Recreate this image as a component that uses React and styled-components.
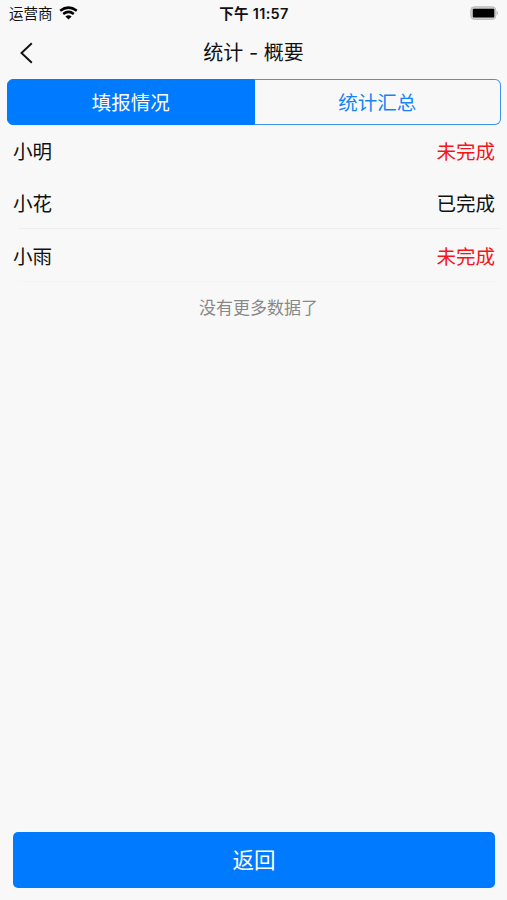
import React from 'react'
import styled, { createGlobalStyle } from 'styled-components'

const GlobalStyle = createGlobalStyle`
  * {
    box-sizing: border-box;
  }

  body {
    margin: 0;
    background: #f8f8f8;
    color: #111;
    font-family: Inter, 'Noto Sans CJK SC', sans-serif;
  }

  button {
    margin: 0;
    padding: 0;
    border: 0;
    font-family: inherit;
  }
`

const Screen = styled.main`
  display: flex;
  flex-direction: column;
  height: 900px;
  background: #f8f8f8;
`

const StatusBar = styled.div`
  display: grid;
  grid-template-columns: 1fr auto 1fr;
  align-items: center;
  height: 26px;
  padding: 0 8px 0 9px;
  font-size: 14.5px;
`

const Carrier = styled.div`
  display: flex;
  align-items: center;
  gap: 6px;
  line-height: 20px;
`

const CarrierName = styled.span`
  padding-top: 2px;
`

const Time = styled.div`
  padding-top: 1px;
  font-size: 14.5px;
  font-weight: 600;
  line-height: 20px;
  letter-spacing: 0.3px;
`

const Battery = styled.svg`
  justify-self: end;
`

const NavBar = styled.header`
  display: grid;
  grid-template-columns: 52px 1fr 52px;
  align-items: center;
  height: 53px;
`

const BackButton = styled.button`
  display: flex;
  justify-content: center;
  background: none;
`

const Title = styled.h1`
  margin: 0;
  padding-bottom: 2px;
  font-size: 20px;
  font-weight: 400;
  text-align: center;
`

const Tabs = styled.div`
  display: flex;
  height: 46px;
  margin: 0 6px 0 7px;
`

const Tab = styled.button`
  flex: 1;
  padding-bottom: 1px;
  border: 1.5px solid ${p => p.$active ? '#007aff' : '#3d94ee'};
  font-size: 19.5px;
  color: ${p => p.$active ? '#fff' : '#1683f5'};
  background: ${p => p.$active ? '#007aff' : '#f8f8f8'};

  &:first-child {
    border-radius: 6px 0 0 6px;
  }

  &:last-child {
    border-left: 0;
    border-radius: 0 6px 6px 0;
  }
`

const List = styled.section`
  padding-bottom: 1px;
`

const Row = styled.div`
  display: flex;
  align-items: center;
  justify-content: space-between;
  height: 52.5px;
  padding: 0 12px 2px 13px;
  font-size: 19.5px;
`

const Status = styled.span`
  color: ${p => p.$done ? '#111' : '#f5141a'};
`

const Divider = styled.hr`
  width: calc(100% - 26px);
  height: 1px;
  margin: -2px 7px 1px 19px;
  border: 0;
  background: ${p => p.$faint ? '#f5f5f5' : '#eee'};
`

const Empty = styled.p`
  margin: 12px 0 0;
  padding-left: 10px;
  font-size: 17px;
  line-height: 25px;
  text-align: center;
  color: #888;
`

const Footer = styled.footer`
  margin-top: auto;
  padding: 0 12px 12px 13px;
`

const Submit = styled.button`
  width: 100%;
  height: 56px;
  padding-bottom: 3px;
  border-radius: 5px;
  font-size: 21.5px;
  color: #fff;
  background: #007aff;
`

const people = [
  { name: '小明', done: false },
  { name: '小花', done: true },
  { name: '小雨', done: false },
]

const WifiIcon = () => (
  <svg width="19" height="14" viewBox="0 0 19 14" fill="none" stroke="#000" strokeWidth="2.5">
    <path d="M1.2 4.8Q9.5-1.6 17.8 4.8" />
    <path d="M4.2 8Q9.5 3.8 14.8 8" />
    <path d="M6.4 10.5Q9.5 8 12.6 10.5L9.5 13.6Z" fill="#000" stroke="none" />
  </svg>
)

const BatteryIcon = () => (
  <Battery width="29" height="14" viewBox="0 0 29 14">
    <rect x="0.8" y="0.8" width="25" height="12.6" rx="3.4" fill="#ccc" stroke="#bbb" strokeWidth="1" />
    <rect x="2.8" y="2.8" width="21.5" height="8.8" rx="1" />
    <path d="M26.6 4.7Q29.6 7 26.6 9.4Z" fill="#bbb" />
  </Battery>
)

const App = () => (
  <>
    <GlobalStyle />
    <Screen>
      <StatusBar>
        <Carrier>
          <CarrierName>运营商</CarrierName>
          <WifiIcon />
        </Carrier>
        <Time>下午 11:57</Time>
        <BatteryIcon />
      </StatusBar>
      <NavBar>
        <BackButton aria-label="返回">
          <svg width="14" height="22" viewBox="0 0 14 22" fill="none" stroke="#111" strokeWidth="1.9">
            <path d="M12.8 1.3L2.5 11L12.8 20.7" />
          </svg>
        </BackButton>
        <Title>统计 - 概要</Title>
      </NavBar>
      <Tabs>
        <Tab $active>填报情况</Tab>
        <Tab>统计汇总</Tab>
      </Tabs>
      <List>
        {people.map(({ name, done }, i) => (
          <React.Fragment key={name}>
            <Row>
              <span>{name}</span>
              <Status $done={done}>{done ? '已完成' : '未完成'}</Status>
            </Row>
            {i > 0 && <Divider $faint={i === people.length - 1} />}
          </React.Fragment>
        ))}
      </List>
      <Empty>没有更多数据了</Empty>
      <Footer>
        <Submit>返回</Submit>
      </Footer>
    </Screen>
  </>
)

export default App
